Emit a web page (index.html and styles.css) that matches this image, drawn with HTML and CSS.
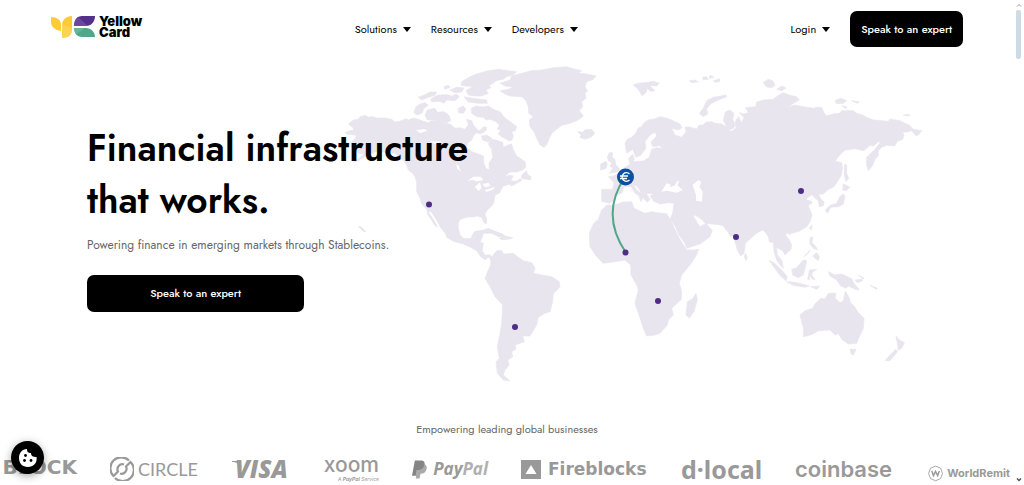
FILE: index.html
```html
<!DOCTYPE html>
<html lang="en">
<head>
<meta charset="utf-8">
<meta name="viewport" content="width=device-width, initial-scale=1">
<title>Yellow Card</title>
<link rel="stylesheet" href="styles.css">
</head>
<body>
<header class="header">
  <a class="brand" href="#" aria-label="Yellow Card">
    <svg class="brand-mark" viewBox="0 0 45 22" aria-hidden="true">
      <path fill="#fccb36" d="M0 1c6 0 10 3 10 8v6C4 14 0 11 0 6z"/>
      <path fill="#fccb36" d="M21 0v14c0 5-4 8-10 8V9c0-5 4-9 10-9z"/>
      <path fill="#ffdc6b" d="M11 8l10 4v2c0 5-4 8-10 8z" opacity=".5"/>
      <path fill="#54308e" d="M31 0h13c0 6-4 10-9 10H23c0-6 3-10 8-10z"/>
      <path fill="#7552a5" d="M27 1l10 9H23c0-4 1-7 4-9z" opacity=".7"/>
      <path fill="#51a78a" d="M23 12h12c5 0 9 4 9 9H31c-5 0-8-4-8-9z"/>
      <path fill="#72bda4" d="M34 12l-9 6c-1-2-2-4-2-6z" opacity=".7"/>
    </svg>
    <span class="brand-name">Yellow<br>Card</span>
  </a>
  <nav class="nav">
    <button class="menu" type="button">Solutions<span class="caret"></span></button>
    <button class="menu" type="button">Resources<span class="caret"></span></button>
    <button class="menu" type="button">Developers<span class="caret"></span></button>
  </nav>
  <div class="account">
    <button class="menu" type="button">Login<span class="caret"></span></button>
    <a class="cta cta-small" href="#">Speak to an expert</a>
  </div>
</header>

<main>
  <section class="hero">
    <svg class="map" viewBox="340 60 590 330" aria-hidden="true">
      <g fill="#e8e5ee" stroke="#e8e5ee" stroke-width="2" stroke-linejoin="round">
        <g transform="translate(340 60) scale(.33333)">
          <path d="M25 192L40 180 55 178 60 170 75 166 85 171 100 170 110 174 135 174 155 178 165 186 178 184 200 176 205 180 220 174 235 178 250 184 265 188 275 182 300 182 310 190 330 192 345 205 360 203 375 208 385 194 380 178 395 182 400 194 415 212 425 208 430 200 440 202 438 212 422 222 410 218 400 228 395 240 385 248 378 262 395 275 415 282 430 288 432 312 438 325 448 330 447 310 458 293 455 268 445 252 453 237 470 241 488 247 490 262 505 255 515 252 520 270 530 288 545 298 555 305 558 320 548 330 530 336 510 336 492 350 508 346 520 348 512 362 528 364 540 356 546 361 530 370 515 378 508 373 490 378 482 390 480 398 465 406 462 425 458 435 440 452 435 463 440 480 439 492 432 488 425 472 412 468 400 471 382 471 362 478 355 488 355 505 360 525 370 535 392 536 396 528 404 514 430 511 428 530 420 545 430 550 427 572 435 586 448 584 458 592 453 600 445 592 435 600 422 590 410 572 392 562 370 552 340 544 320 532 316 520 300 500 290 480 278 462 270 452 266 458 278 475 290 496 292 502 283 495 275 480 264 466 260 448 245 432 240 415 230 395 230 368 225 350 218 340 205 330 200 316 190 300 180 292 165 280 145 278 120 275 105 275 90 283 72 292 50 304 40 307 60 293 72 282 55 280 45 270 35 263 32 248 45 236 50 226 22 223 15 218 30 212 42 210 38 202z"/>
          <path d="M228 140L240 132 255 128 265 135 252 145 246 160 230 165 222 158zM255 165L262 150 285 145 292 157 310 155 320 160 328 168 332 182 318 190 295 186 285 180 262 180zM235 112L255 104 270 96 290 96 285 106 265 112 245 120zM280 112L295 105 320 104 335 108 350 102 358 110 345 122 320 120 312 130 300 124 275 126 272 118zM330 90L350 82 372 84 365 96 345 98zM312 80L325 76 330 82 315 88zM365 65L390 50 410 42 440 33 475 28 505 32 530 35 520 45 500 50 490 58 468 62 460 70 448 75 452 83 438 90 445 100 425 108 405 108 385 105 378 92 390 84 400 80 380 78 364 76zM372 110L392 114 440 120 442 130 415 130 385 126zM355 145L370 138 378 148 370 160 355 158zM394 145L408 138 430 141 445 138 460 148 480 155 490 168 500 178 515 188 530 200 526 212 515 215 520 228 516 240 508 243 488 232 475 222 482 210 472 208 478 195 468 185 450 178 438 180 430 172 410 170 395 160zM425 228L440 225 455 235 445 246 428 240zM545 345L560 332 562 343 573 350 572 359 556 357 545 356z"/>
          <path d="M480 92L505 88 520 82 495 78 480 70 510 60 515 48 545 40 575 32 605 30 640 23 680 20 700 26 725 32 715 40 740 42 768 48 760 58 740 65 735 80 742 92 735 100 738 115 725 125 728 140 718 152 730 168 715 180 690 190 665 196 650 208 635 220 628 235 620 255 612 262 600 255 590 235 582 215 570 200 568 180 580 170 566 160 565 140 558 122 545 110 510 108 495 102zM715 215L730 218 735 210 755 208 764 220 755 228 735 237 720 232 724 225zM425 512L445 505 465 514 488 522 500 532 475 530 455 520 430 520zM478 535L495 528 518 533 510 537 485 539zM55 500L60 499 70 506 78 515 73 516z"/>
          <path d="M62 595L80 572 95 572 100 582 130 580 145 592 160 602 185 608 195 625 190 640 215 645 245 650 268 665 270 680 250 702 248 725 240 755 225 760 205 772 200 795 180 828 158 828 163 845 135 855 138 868 125 875 128 890 113 900 118 915 105 930 100 945 120 963 100 960 82 940 78 905 88 895 82 860 90 820 95 790 98 735 75 710 60 680 45 655 55 630 62 615z" transform="translate(390)"/>
        </g>
        <g transform="translate(560 60) scale(.33333)">
          <path d="M195 250L202 238 215 232 228 218 235 204 245 200 252 188 265 180 285 176 300 170 318 174 330 178 345 185 360 192 366 203 355 210 335 205 345 225 365 232 378 215 375 202 385 200 410 207 418 195 430 195 437 187 455 185 465 190 485 192 500 202 490 180 496 156 510 150 522 160 518 178 526 195 520 205 506 210 515 214 528 204 526 184 535 170 545 188 552 172 538 158 552 162 565 158 557 143 588 140 590 126 610 120 640 118 655 106 670 98 690 106 710 110 718 120 700 130 685 142 705 135 740 142 763 145 768 142 785 142 792 158 800 168 820 162 838 160 845 152 880 152 890 160 908 165 920 172 940 180 985 184 990 177 1020 182 1035 190 1048 195 1060 208 1085 212 1078 222 1068 228 1055 212 1042 216 1028 216 1032 225 1028 238 1012 244 1004 258 980 256 965 262 955 272 955 286 944 300 938 316 925 332 920 315 920 292 932 280 943 270 962 246 955 245 940 258 930 256 912 272 885 266 855 270 842 282 825 303 845 308 848 325 843 348 822 380 805 388 790 402 775 403 782 415 793 427 790 437 778 440 775 422 763 412 756 404 742 413 738 420 753 423 757 428 745 437 750 450 756 465 750 485 740 500 718 514 700 518 688 523 678 518 678 528 688 540 695 555 693 568 675 585 668 572 656 566 650 562 652 585 666 602 670 625 660 615 650 600 642 575 640 548 628 545 625 530 615 515 608 510 592 518 580 528 556 550 552 580 542 588 532 570 525 545 518 526 512 530 503 515 490 498 478 494 435 490 425 478 405 465 400 468 412 488 420 500 438 490 457 512 450 530 420 552 380 565 375 550 357 525 346 500 330 478 338 460 342 430 325 428 300 432 282 424 270 408 282 402 268 400 260 402 270 418 262 427 253 418 245 400 230 378 220 374 232 392 258 407 250 412 243 425 238 410 222 396 214 380 192 380 186 398 172 405 165 420 148 430 125 424 125 388 158 388 162 368 145 350 160 348 178 340 192 324 210 312 206 295 218 283 223 296 220 305 250 303 268 292 275 268 290 263 310 265 298 257 278 260 273 246 290 228 286 217 270 225 255 245 258 265 242 286 228 292 218 268 200 280z"/>
          <path d="M140 435L160 436 190 426 215 425 222 445 255 460 275 455 290 458 320 461 330 478 342 502 358 535 380 570 402 570 416 568 408 588 395 608 365 645 358 670 365 695 364 718 335 745 340 765 325 780 322 795 300 820 280 826 260 828 252 810 242 780 225 730 235 690 230 675 213 645 212 615 195 600 165 605 130 610 110 590 90 560 88 520 100 492 115 478 125 450zM408 700L412 720 402 755 388 774 378 765 382 725 398 716z"/>
          <path d="M148 278L158 278 156 290 165 300 168 315 180 328 174 335 148 340 158 325 150 318 156 308 145 302 142 290zM122 312L138 304 142 312 138 326 122 330zM53 215L68 217 75 210 92 210 104 220 95 230 78 237 60 232 65 225zM220 75L235 70 250 68 275 68 270 78 285 92 272 94 262 86 258 98 246 107 235 88zM258 68L280 64 298 70 290 78 270 76zM418 160L430 145 440 122 460 112 498 105 500 110 470 122 452 132 440 146 443 162 430 170zM388 62L405 60 415 66 395 68zM428 52L440 50 445 58 430 60zM450 46L462 52 448 55zM460 62L480 56 478 65 465 67zM610 67L625 58 638 62 645 76 635 83 618 80zM650 88L666 78 678 84 665 92zM825 122L842 115 860 122 850 130 830 131zM875 122L898 125 892 130zM845 137L860 140 858 146zM1030 166L1045 162 1050 167zM854 312L860 315 860 340 866 355 858 365 853 345zM850 372L870 382 858 392 848 390zM848 402L855 408 850 432 835 440 812 442 802 460 796 450 810 436 830 430 838 412zM748 505L756 494 755 510zM750 533L758 530 756 548 768 562 760 565 750 552zM556 580L562 592 558 602 553 590z"/>
        </g>
        <g transform="translate(720 200) scale(.33333)">
          <path d="M148 182L160 187 185 210 202 230 198 243 180 226 162 202zM200 245L225 247 250 253 268 258 255 262 220 256zM272 260L300 258 290 268zM215 208L230 203 250 180 260 182 255 205 250 225 235 233 218 225zM268 210L290 208 278 216 275 225 285 238 278 238 270 228 268 240 263 238zM275 128L288 140 292 150 280 145zM278 168L290 158 298 170 295 182 285 175zM252 170L270 150 268 156zM325 215L345 225 365 222 395 236 402 250 418 270 405 268 385 258 378 265 362 258 350 240 330 228zM405 240L425 238 428 242 412 248zM415 225L432 235 428 238zM450 256L472 265 468 268z"/>
          <path d="M240 345L255 332 278 325 285 312 302 295 315 297 325 280 348 280 345 295 360 308 370 302 376 273 386 290 392 308 402 318 415 338 432 355 430 385 420 405 410 430 385 432 365 418 355 400 345 405 330 390 295 392 275 404 250 410 250 385zM390 447L408 448 400 465 394 462zM528 408L538 420 553 428 545 445 535 450 532 430zM528 448L532 455 510 482 495 482 510 465z"/>
        </g>
      </g>
      <g fill="#fff">
        <g transform="translate(340 60) scale(.33333)">
          <path d="M383 362L400 350 422 350 430 360 412 364 398 360zM405 380L420 367 425 385 415 393zM428 372L445 368 452 378 435 382zM432 391L465 380 458 390 440 396zM348 312L356 318 362 335 352 326zM228 210L255 207 262 212 240 220zM270 243L308 245 285 252zM418 185L430 190 425 198z"/>
        </g>
        <g transform="translate(560 60) scale(.33333)">
          <path d="M304 395L320 370 332 374 330 382 345 376 350 365 358 362 352 376 368 390 350 398 320 392zM398 375L415 360 424 366 418 380 428 395 426 425 408 422 408 405z"/>
        </g>
      </g>
      <path d="M625 177Q600 214 625.500 252" fill="none" stroke="#51a78a" stroke-width="2"/>
      <g fill="#4f2d87">
        <circle cx="429" cy="204.500" r="3"/><circle cx="515" cy="327" r="3"/><circle cx="625.500" cy="252.500" r="3"/>
        <circle cx="658" cy="301" r="3"/><circle cx="736" cy="237" r="3"/><circle cx="801" cy="191" r="3"/>
      </g>
      <circle cx="625.500" cy="177" r="8.500" fill="#0b51a1"/>
      <path d="M629.500 174a4.300 4.300 0 1 0 0 6M620 176h8m-8 2.500h7" fill="none" stroke="#fff" stroke-width="1.300"/>
    </svg>
    <div class="hero-copy">
      <h1 class="title">Financial infrastructure<br>that works.</h1>
      <p class="lead">Powering finance in emerging markets through Stablecoins.</p>
      <a class="cta cta-wide" href="#">Speak to an expert</a>
    </div>
  </section>

  <section class="partners">
    <p class="partners-title">Empowering leading global businesses</p>
    <div class="logos">
      <span class="logo block">BLOCK</span>
      <span class="logo circle">
        <svg width="24" height="24" viewBox="0 0 24 24" fill="none" stroke="#999" stroke-width="2.200" aria-hidden="true"><path d="M19 3.500A10.500 10.500 0 0 0 3.500 19L8 14.500a5 5 0 0 1 6-7M5 21A10.500 10.500 0 0 0 20.500 5L16 9.500a5 5 0 0 1-6 7"/></svg>
        CIRCLE
      </span>
      <span class="logo visa"><svg class="visa-serif" width="10" height="7" viewBox="0 0 10 7" aria-hidden="true"><path fill="#999" d="M0 0h8l2 7C8 3 5 1 0 1z"/></svg>VISA</span>
      <span class="logo xoom"><span>xoom</span><small class="xoom-note">A <b>PayPal</b> Service</small></span>
      <span class="logo paypal">
        <svg width="16" height="19" viewBox="0 0 16 19" aria-hidden="true"><path fill="#aaa" d="M5 4h8c3 1 3 4 2 6-1 3-3 4-6 4l-1 5H4z"/><path fill="#858585" d="M3 0h6c4 0 5 2 4 5-1 4-4 5-8 5l-1 6H0z"/></svg>
        <span>Pay<span class="pal">Pal</span></span>
      </span>
      <span class="logo fireblocks">
        <svg width="20" height="19" viewBox="0 0 20 19" aria-hidden="true"><path fill="#999" fill-rule="evenodd" d="M0 0h20v19H0zM10 5l-5.500 9h11z"/></svg>
        Fireblocks
      </span>
      <span class="logo dlocal">d·local</span>
      <span class="logo coinbase">coinbase</span>
      <span class="logo worldremit">
        <svg width="18" height="19" viewBox="0 0 18 19" fill="none" stroke="#999" aria-hidden="true"><path d="M9 .7l6 2.500 2.300 6.300-2.300 6-6 2.700-6-2.700-2.300-6L3 3.200z"/><path stroke-width="1.700" d="M4.500 6.500l2 5.500L9 7l2.500 5 2-5.500"/></svg>
        WorldRemit
      </span>
    </div>
  </section>
</main>

<button class="cookie" type="button" aria-label="Cookie settings">
  <svg width="18" height="18" viewBox="0 0 18 18" aria-hidden="true"><path fill="#fff" d="M8 0c0 3 1 4 4 4 0 3 2 4 5.500 4C18.500 13 15 18 9 18S0 14 0 9s3-9 8-9z"/><g fill="#000"><circle cx="6.500" cy="6.500" r="1.400"/><circle cx="5.500" cy="11.500" r="1.400"/><circle cx="12" cy="11.500" r="1.400"/></g></svg>
</button>
<div class="scrollbar" aria-hidden="true">
  <svg width="6" height="4" viewBox="0 0 6 4" fill="none" stroke="#999"><path d="M1 3.500l2-2 2 2"/></svg>
  <span class="thumb"></span>
  <svg class="arrow-down" width="6" height="4" viewBox="0 0 6 4" fill="none" stroke="#555" stroke-width="1.500"><path d="M1 .5l2 2 2-2"/></svg>
</div>
</body>
</html>
```
FILE: styles.css
```css
* { box-sizing: border-box; }
body {
  margin: 0;
  padding-right: 10px;
  background: #fff;
  color: #000;
  font-family: Jost, Lato, sans-serif;
  overflow: hidden;
}
button { border: 0; background: none; padding: 0; font: inherit; color: inherit; cursor: pointer; }
a { color: inherit; text-decoration: none; }

.header {
  display: flex;
  justify-content: space-between;
  align-items: center;
  padding: 11px 51px 0;
}
.brand { display: flex; align-items: center; gap: 3px; padding-bottom: 4px; }
.brand-mark { width: 45px; height: 22px; }
.brand-name { font: 900 13px/11px Inter, sans-serif; }
.nav { display: flex; gap: 20px; }
.menu { display: flex; align-items: center; gap: 6px; font-size: 11px; font-weight: 400; line-height: 16px; color: #000; }
.caret { border: 4px solid transparent; border-top: 5px solid #000; border-bottom: 0; }
.account { display: flex; align-items: center; gap: 20px; }
.cta {
  display: flex;
  justify-content: center;
  align-items: center;
  background: #000;
  color: #fff;
  border-radius: 7px;
  font-size: 11px;
  font-weight: 500;
  line-height: 16px;
}
.cta-small { padding: 10px 11px; }
.cta-wide { width: 217px; padding: 10px 12px 11px; }

.hero { position: relative; padding: 75px 0 0 87px; min-height: 374px; }
.map { position: absolute; left: 340px; top: 13px; width: 590px; height: 330px; }
.hero-copy { position: relative; }
.title { margin: 0; font-size: 37px; line-height: 52px; font-weight: 600; }
.lead { margin: 9px 0 20px; font-size: 12px; line-height: 20px; color: #666; }

.partners { overflow: hidden; }
.partners-title { margin: 0; text-align: center; font-size: 11px; line-height: 16px; color: #666; }
.logos { display: flex; align-items: center; gap: 33px; margin-left: -20px; padding-top: 16px; height: 48px; color: #999; }
.logo { flex: none; display: flex; align-items: center; white-space: nowrap; line-height: 24px; }
.block { width: 97px; justify-content: flex-end; font: 700 20px/24px "DejaVu Sans", sans-serif; padding-bottom: 4px; }
.circle { width: 89px; gap: 4px; font: 400 18px/24px Lato, sans-serif; }
.visa { width: 57px; font: italic 800 24px/24px "Open Sans", sans-serif; }
.visa-serif { margin: -10px -7px 0 0; }
.xoom { width: 57px; flex-direction: column; align-items: flex-end; font: 500 21px/16px Inter, sans-serif; }
.xoom-note { font: italic 400 5px/6px Inter, sans-serif; padding-top: 3px; }
.paypal { width: 76px; gap: 6px; font: italic 700 17px/24px "Open Sans", sans-serif; }
.pal { color: #b0b0b0; }
.fireblocks { width: 127px; gap: 7px; font: 700 17px/24px "DejaVu Sans", sans-serif; }
.dlocal { width: 81px; font: 700 25px/24px "Noto Sans", sans-serif; }
.coinbase { width: 100px; font: 600 22px/24px Inter, sans-serif; }
.worldremit { width: 82px; gap: 4px; font: 700 11px/20px Inter, sans-serif; padding-top: 8px; }

.cookie {
  position: fixed;
  left: 11px;
  bottom: 11px;
  width: 33px;
  height: 33px;
  display: grid;
  place-items: center;
  border-radius: 50%;
  background: #000;
  box-shadow: 0 2px 8px rgba(0, 0, 0, .35);
}
.scrollbar {
  position: fixed;
  inset: 0 2px 0 auto;
  width: 6px;
  padding: 3px 0;
  display: flex;
  flex-direction: column;
  gap: 3px;
}
.thumb { width: 5px; height: 49px; border-radius: 2px; background: #cfdbe4; }
.arrow-down { margin-top: auto; }
```
